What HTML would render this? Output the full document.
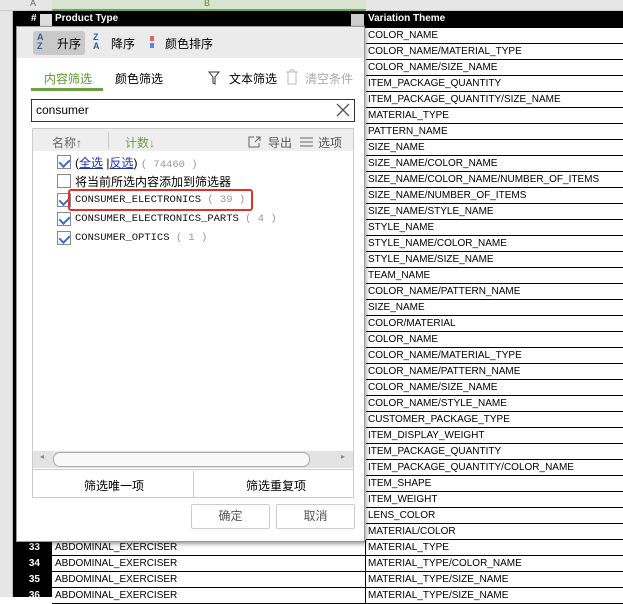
<!DOCTYPE html>
<html><head><meta charset="utf-8"><style>
*{margin:0;padding:0;box-sizing:border-box}
body{width:623px;height:597px;overflow:hidden;position:relative;background:#fff;font-family:"Liberation Sans","Noto Sans CJK SC",sans-serif;font-size:11px}
.a{position:absolute}
.rowc{position:absolute;left:366px;width:257px;height:16px;border-bottom:1px solid #000;font-size:10px;line-height:16px;padding-left:2px;white-space:nowrap;overflow:hidden}
.rowb{position:absolute;left:52px;width:314px;height:16px;border-bottom:1px solid #000;border-right:1px solid #000;font-size:10px;line-height:16px;padding-left:3px}
.num{position:absolute;left:13px;width:39px;height:16px;color:#fff;font-weight:bold;font-size:10px;line-height:16px;text-align:right;padding-right:12px}
.cb{position:absolute;left:57px;width:14px;height:14px;border:1px solid #888;background:#fff}
.cb.on::after{content:"";position:absolute;left:3px;top:1px;width:5px;height:8px;border:solid #3a6fc4;border-width:0 2px 2px 0;transform:rotate(45deg)}
.it{position:absolute;left:75px;font-family:"Liberation Mono",monospace;font-size:10.5px;color:#111}
.g{color:#999}
</style></head><body>
<div class="a" style="left:0;top:0;width:623px;height:11px;background:#e6e6e6;border-bottom:1px solid #ccc"></div>
<div class="a" style="left:30px;top:-2px;font-size:9px;color:#666">A</div>
<div class="a" style="left:52px;top:0;width:314px;height:11px;background:#d8e4d0;border-bottom:2px solid #6aa84f"></div>
<div class="a" style="left:204px;top:-2px;font-size:9px;color:#5a8a3a">B</div>
<div class="a" style="left:0;top:11px;width:13px;height:586px;background:#e6e6e6;border-right:1px solid #bbb"></div>
<div class="a" style="left:13px;top:11px;width:39px;height:586px;background:#000"></div>
<div style="position:absolute;left:0;top:2px;width:623px;height:597px">
<div class="a" style="left:13px;top:9px;width:610px;height:17px;background:#000"></div>
<div class="a" style="left:31px;top:11px;color:#fff;font-weight:bold;font-size:10px">#</div>
<div class="a" style="left:40px;top:12px;width:12px;height:12px;background:#ddd"></div>
<div class="a" style="left:55px;top:11px;color:#fff;font-weight:bold;font-size:10px">Product Type</div>
<div class="a" style="left:351px;top:12px;width:13px;height:12px;background:#ccc"></div>
<div class="a" style="left:368px;top:11px;color:#fff;font-weight:bold;font-size:10px">Variation Theme</div>
<div class="num" style="top:538px">33</div><div class="rowb" style="top:538px">ABDOMINAL_EXERCISER</div>
<div class="num" style="top:554px">34</div><div class="rowb" style="top:554px">ABDOMINAL_EXERCISER</div>
<div class="num" style="top:570px">35</div><div class="rowb" style="top:570px">ABDOMINAL_EXERCISER</div>
<div class="num" style="top:586px">36</div><div class="rowb" style="top:586px">ABDOMINAL_EXERCISER</div>
<div class="rowc" style="top:26px">COLOR_NAME</div><div class="rowc" style="top:42px">COLOR_NAME/MATERIAL_TYPE</div><div class="rowc" style="top:58px">COLOR_NAME/SIZE_NAME</div><div class="rowc" style="top:74px">ITEM_PACKAGE_QUANTITY</div><div class="rowc" style="top:90px">ITEM_PACKAGE_QUANTITY/SIZE_NAME</div><div class="rowc" style="top:106px">MATERIAL_TYPE</div><div class="rowc" style="top:122px">PATTERN_NAME</div><div class="rowc" style="top:138px">SIZE_NAME</div><div class="rowc" style="top:154px">SIZE_NAME/COLOR_NAME</div><div class="rowc" style="top:170px">SIZE_NAME/COLOR_NAME/NUMBER_OF_ITEMS</div><div class="rowc" style="top:186px">SIZE_NAME/NUMBER_OF_ITEMS</div><div class="rowc" style="top:202px">SIZE_NAME/STYLE_NAME</div><div class="rowc" style="top:218px">STYLE_NAME</div><div class="rowc" style="top:234px">STYLE_NAME/COLOR_NAME</div><div class="rowc" style="top:250px">STYLE_NAME/SIZE_NAME</div><div class="rowc" style="top:266px">TEAM_NAME</div><div class="rowc" style="top:282px">COLOR_NAME/PATTERN_NAME</div><div class="rowc" style="top:298px">SIZE_NAME</div><div class="rowc" style="top:314px">COLOR/MATERIAL</div><div class="rowc" style="top:330px">COLOR_NAME</div><div class="rowc" style="top:346px">COLOR_NAME/MATERIAL_TYPE</div><div class="rowc" style="top:362px">COLOR_NAME/PATTERN_NAME</div><div class="rowc" style="top:378px">COLOR_NAME/SIZE_NAME</div><div class="rowc" style="top:394px">COLOR_NAME/STYLE_NAME</div><div class="rowc" style="top:410px">CUSTOMER_PACKAGE_TYPE</div><div class="rowc" style="top:426px">ITEM_DISPLAY_WEIGHT</div><div class="rowc" style="top:442px">ITEM_PACKAGE_QUANTITY</div><div class="rowc" style="top:458px">ITEM_PACKAGE_QUANTITY/COLOR_NAME</div><div class="rowc" style="top:474px">ITEM_SHAPE</div><div class="rowc" style="top:490px">ITEM_WEIGHT</div><div class="rowc" style="top:506px">LENS_COLOR</div><div class="rowc" style="top:522px">MATERIAL/COLOR</div><div class="rowc" style="top:538px">MATERIAL_TYPE</div><div class="rowc" style="top:554px">MATERIAL_TYPE/COLOR_NAME</div><div class="rowc" style="top:570px">MATERIAL_TYPE/SIZE_NAME</div><div class="rowc" style="top:586px">MATERIAL_TYPE/SIZE_NAME</div>
</div>

<!-- dialog -->
<div class="a" style="left:16px;top:26px;width:349px;height:516px;background:#fff;border:1px solid #999;box-shadow:1px 2px 4px rgba(0,0,0,.4)"></div>
<div class="a" style="left:17px;top:27px;width:347px;height:31px;background:#ebebeb"></div>
<div class="a" style="left:33px;top:31px;width:52px;height:24px;background:#c9c9c9;border-radius:3px"></div>
<div class="a" style="left:37px;top:33px;font-size:9px;line-height:9px;color:#2a5fb0;font-weight:bold">A<br>Z</div>
<div class="a" style="left:57px;top:35px;font-size:12px">升序</div>
<div class="a" style="left:93px;top:33px;font-size:9px;line-height:9px;color:#2a5fb0;font-weight:bold">Z<br>A</div>
<div class="a" style="left:111px;top:35px;font-size:12px">降序</div>
<div class="a" style="left:150px;top:36px;width:4px;height:5px;background:#e06060"></div>
<div class="a" style="left:150px;top:43px;width:4px;height:5px;background:#6080e0"></div>
<div class="a" style="left:165px;top:35px;font-size:12px">颜色排序</div>
<div class="a" style="left:44px;top:70px;font-size:12px;color:#5c9a34">内容筛选</div>
<div class="a" style="left:31px;top:88px;width:72px;height:3px;background:#6aa04a"></div>
<div class="a" style="left:115px;top:70px;font-size:12px">颜色筛选</div>
<svg class="a" style="left:208px;top:70px" width="14" height="16"><path d="M1 2h10l-4 5v7l-2-1V7z" fill="none" stroke="#333"/></svg>
<div class="a" style="left:229px;top:70px;font-size:12px">文本筛选</div>
<svg class="a" style="left:285px;top:69px" width="14" height="16"><path d="M1 3h12M5 3V1h4v2M3 3v12h8V3" fill="none" stroke="#bbb"/></svg>
<div class="a" style="left:305px;top:70px;font-size:12px;color:#aaa">清空条件</div>
<div class="a" style="left:31px;top:99px;width:324px;height:23px;border:1px solid #333"></div>
<div class="a" style="left:36px;top:103px;font-size:12px">consumer</div>
<svg class="a" style="left:336px;top:103px" width="14" height="14"><path d="M1 1L13 13M13 1L1 13" stroke="#555" stroke-width="1.3"/></svg>
<div class="a" style="left:32px;top:128px;width:322px;height:370px;border:1px solid #ccc"></div>
<div class="a" style="left:33px;top:129px;width:320px;height:22px;background:#eee"></div>
<div class="a" style="left:52px;top:134px;font-size:12px;color:#666">名称↑</div>
<div class="a" style="left:108px;top:132px;width:1px;height:17px;background:#ccc"></div>
<div class="a" style="left:125px;top:134px;font-size:12px;color:#6aa04a">计数↓</div>
<svg class="a" style="left:248px;top:135px" width="14" height="13"><path d="M6 2H1v10h10V8M7 7l5-5M8 2h4v4" fill="none" stroke="#666"/></svg>
<div class="a" style="left:268px;top:134px;font-size:12px;color:#555">导出</div>
<svg class="a" style="left:300px;top:137px" width="13" height="10"><path d="M0 1h13M0 5h13M0 9h13" stroke="#666"/></svg>
<div class="a" style="left:318px;top:134px;font-size:12px;color:#555">选项</div>
<div class="cb on" style="top:155px"></div><div class="a" style="left:75px;top:154px;font-size:12px">(<u style="color:#2233aa">全选</u> |<u style="color:#2233aa">反选</u>) <span class="g" style="font-family:'Liberation Mono';font-size:10.5px">( 74460 )</span></div>
<div class="cb" style="top:174px"></div><div class="a" style="left:75px;top:173px;font-size:12px">将当前所选内容添加到筛选器</div>
<div class="cb on" style="top:193px"></div><div class="it" style="top:194px">CONSUMER_ELECTRONICS <span class="g">( 39 )</span></div>
<div class="cb on" style="top:212px"></div><div class="it" style="top:213px">CONSUMER_ELECTRONICS_PARTS <span class="g">( 4 )</span></div>
<div class="cb on" style="top:231px"></div><div class="it" style="top:232px">CONSUMER_OPTICS <span class="g">( 1 )</span></div>
<div class="a" style="left:68px;top:189px;width:185px;height:22px;border:2px solid #e0302a;border-radius:3px"></div>
<div class="a" style="left:33px;top:451px;width:320px;height:17px;background:#e3e3e3"></div>
<div class="a" style="left:53px;top:452px;width:257px;height:15px;background:#f8f8f8;border:1px solid #aaa;border-radius:7px"></div>
<div class="a" style="left:40px;top:452px;font-size:8px;color:#888">◂</div>
<div class="a" style="left:341px;top:452px;font-size:8px;color:#888">▸</div>
<div class="a" style="left:33px;top:469px;width:320px;height:1px;background:#ccc"></div>
<div class="a" style="left:193px;top:471px;width:1px;height:26px;background:#ccc"></div>
<div class="a" style="left:84px;top:477px;font-size:12px">筛选唯一项</div>
<div class="a" style="left:246px;top:477px;font-size:12px">筛选重复项</div>
<div class="a" style="left:191px;top:504px;width:79px;height:25px;border:1px solid #ccc;border-radius:2px;text-align:center;line-height:23px;font-size:12px;color:#555">确定</div>
<div class="a" style="left:276px;top:504px;width:79px;height:25px;border:1px solid #ccc;border-radius:2px;text-align:center;line-height:23px;font-size:12px;color:#555">取消</div>
</body></html>
